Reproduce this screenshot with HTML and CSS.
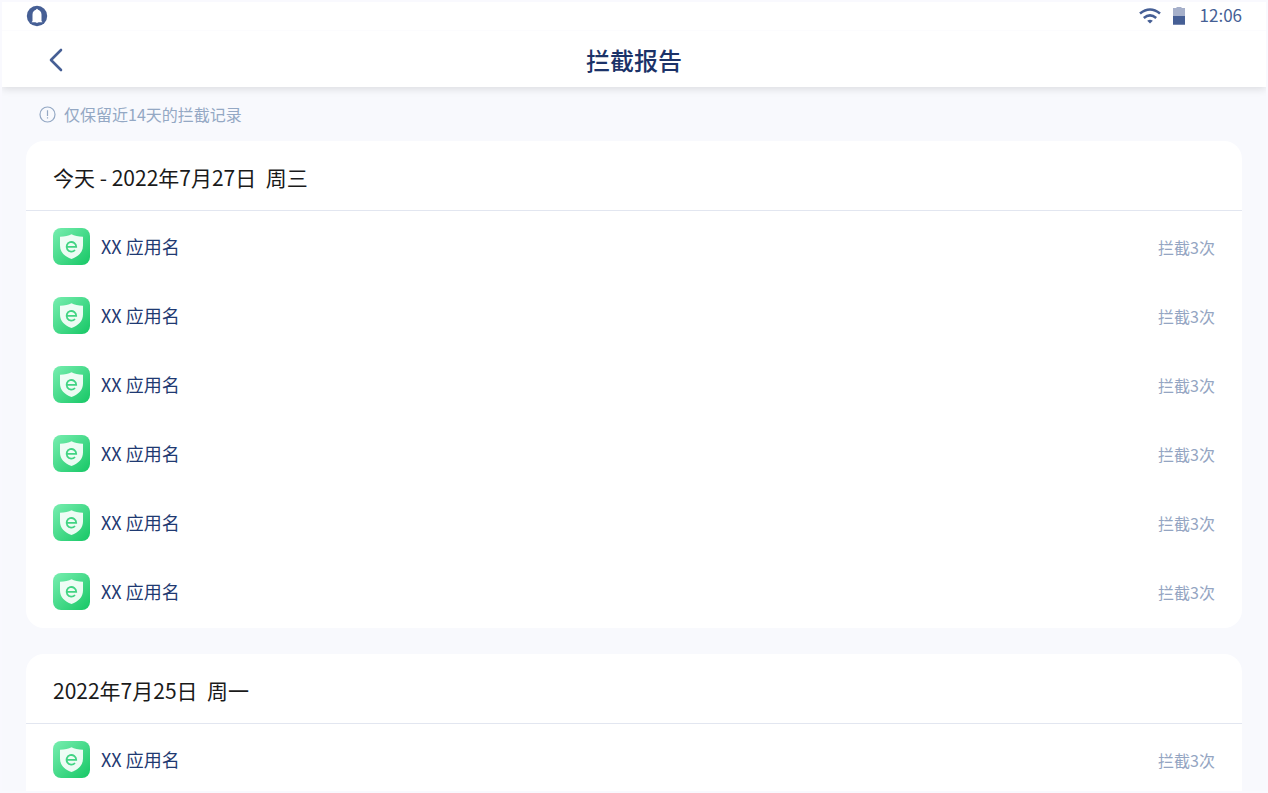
FILE: index.html
```html
<!DOCTYPE html>
<html lang="zh-CN">
<head>
  <meta charset="UTF-8" />
  <meta name="viewport" content="width=device-width, initial-scale=1.0"/>
  <title>拦截报告</title>
  <link rel="stylesheet" href="styles.css">
</head>
<body>

  <!-- Shared app icon -->
  <svg class="symbols" aria-hidden="true">
    <defs>
      <linearGradient id="green" x1="0" y1="0" x2="1" y2="1">
        <stop offset="0" stop-color="#78eeb0"/>
        <stop offset="1" stop-color="#16c765"/>
      </linearGradient>
      <symbol id="app-icon" viewBox="0 0 37 37">
        <rect width="37" height="37" rx="8" fill="url(#green)"/>
        <path d="M18.500 6.300C21 7.600 25.500 8.800 30 8.800V17.500C30 24 25.500 28.500 18.500 31C11.500 28.500 7 24 7 17.500V8.800C11.500 8.800 16 7.600 18.500 6.300Z" fill="#fff" fill-opacity=".9"/>
        <path d="M13.800 18.800H23.200A4.800 4.800 0 1 0 22 22" fill="none" stroke="#41d483" stroke-width="1.800"/>
      </symbol>
    </defs>
  </svg>

  <div class="screen">
    <header class="top">
      <div class="status-bar">
        <svg class="status-logo" width="22" height="22" viewBox="0 0 22 22">
          <circle cx="11" cy="11" r="10.200" fill="#465f95"/>
          <path d="M5.500 17.200L6.500 16V9.500C6.500 6.500 8.500 5 10 4.700Q11 3 12 4.700C13.500 5 15.500 6.500 15.500 9.500V16L16.500 17.200H12.500Q11 18.200 9.500 17.200Z" fill="#fff"/>
        </svg>
        <div class="status-right">
          <svg width="22" height="16" viewBox="0 0 22 16" fill="none" stroke="#465f95" stroke-width="2.600">
            <path d="M1 5.600Q11 -2.600 21 5.600"/>
            <path d="M4.800 9.900Q11 5 17.200 9.900"/>
            <path d="M8.200 12.700Q11 11 13.800 12.700L11 15.600Z" fill="#465f95" stroke="none"/>
          </svg>
          <svg width="12" height="18" viewBox="0 0 12 18">
            <path d="M0 1H3.500V0H8.500V1H12V18H0Z" fill="#a6b0ca"/>
            <path d="M0 9H12V17.500H0Z" fill="#465f95"/>
          </svg>
          <span class="time">12:06</span>
        </div>
      </div>
      <div class="nav-bar">
        <button class="back" type="button" aria-label="返回">
          <svg width="16" height="24" viewBox="0 0 16 24" fill="none" stroke="#465f95" stroke-width="2.600" stroke-linecap="round" stroke-linejoin="round">
            <path d="M13 2L3 12L13 22"/>
          </svg>
        </button>
        <h1>拦截报告</h1>
      </div>
    </header>

    <main>
      <p class="tip">
        <svg width="17" height="17" viewBox="0 0 17 17" fill="none" stroke="#94a8c4" stroke-width="1.200">
          <circle cx="8.500" cy="8.500" r="7.500"/>
          <path d="M8.500 4.300V10M8.500 11.200V12.600"/>
        </svg>
        仅保留近14天的拦截记录
      </p>

      <section class="card">
        <h2>今天 - 2022年7月27日&nbsp; 周三</h2>
        <ul>
          <li><svg class="app-icon"><use href="#app-icon"/></svg><span class="name">XX 应用名</span><span class="count">拦截3次</span></li>
          <li><svg class="app-icon"><use href="#app-icon"/></svg><span class="name">XX 应用名</span><span class="count">拦截3次</span></li>
          <li><svg class="app-icon"><use href="#app-icon"/></svg><span class="name">XX 应用名</span><span class="count">拦截3次</span></li>
          <li><svg class="app-icon"><use href="#app-icon"/></svg><span class="name">XX 应用名</span><span class="count">拦截3次</span></li>
          <li><svg class="app-icon"><use href="#app-icon"/></svg><span class="name">XX 应用名</span><span class="count">拦截3次</span></li>
          <li><svg class="app-icon"><use href="#app-icon"/></svg><span class="name">XX 应用名</span><span class="count">拦截3次</span></li>
        </ul>
      </section>

      <section class="card">
        <h2>2022年7月25日&nbsp; 周一</h2>
        <ul>
          <li><svg class="app-icon"><use href="#app-icon"/></svg><span class="name">XX 应用名</span><span class="count">拦截3次</span></li>
        </ul>
      </section>
    </main>
  </div>

</body>
</html>
```
FILE: styles.css
```css
* {
  box-sizing: border-box;
}

body {
  margin: 0;
  font-family: "Noto Sans CJK SC", sans-serif;
  background: #f8f9fd;
}

svg {
  display: block;
  flex-shrink: 0;
}

.symbols {
  position: absolute;
  width: 0;
  height: 0;
}

.screen {
  height: 100vh;
  border: 2px solid #f9f9fe;
  display: flex;
  flex-direction: column;
  overflow: hidden;
}

.top {
  background: #fff;
  box-shadow: 0 2px 8px rgba(0, 0, 0, 0.12);
  flex-shrink: 0;
  position: relative;
  z-index: 1;
}

.status-bar {
  display: flex;
  justify-content: space-between;
  align-items: center;
  height: 29px;
  padding: 0 24px;
  border-bottom: 1px solid #fcfcfe;
}

.status-right {
  display: flex;
  align-items: center;
  gap: 12px;
}

.time {
  margin-left: 3px;
  padding-bottom: 2px;
  font-size: 17px;
  line-height: 24px;
  color: #465f95;
}

.nav-bar {
  display: grid;
  grid-template-columns: 1fr auto 1fr;
  align-items: center;
  height: 56px;
  padding: 1px 46px 0;
}

.back {
  justify-self: start;
  padding: 0;
  border: none;
  background: none;
  cursor: pointer;
}

h1 {
  margin: 0;
  font-size: 24px;
  line-height: 36px;
  font-weight: 500;
  color: #1b3268;
}

main {
  flex: 1;
  min-height: 0;
  overflow: hidden;
  padding: 15px 24px 0;
}

.tip {
  display: flex;
  align-items: center;
  gap: 8px;
  margin: 0 0 15px;
  padding-left: 13px;
  font-size: 16px;
  line-height: 24px;
  color: #94a8c4;
}

.card {
  background: #fff;
  border-radius: 18px;
  margin-bottom: 26px;
}

.card:last-child {
  margin-bottom: 0;
  border-radius: 18px 18px 0 0;
}

h2 {
  margin: 0;
  padding: 20px 27px 17px;
  border-bottom: 1px solid #e2e6f0;
  font-size: 21px;
  line-height: 32px;
  font-weight: 400;
  color: #1a1a1a;
}

ul {
  list-style: none;
  margin: 0;
  padding: 1px 0 2px;
}

li {
  display: flex;
  align-items: center;
  padding: 16px 27px;
}

.app-icon {
  width: 37px;
  height: 37px;
}

.name {
  margin-left: 11px;
  padding-bottom: 2px;
  font-size: 18px;
  line-height: 28px;
  color: #1f3a72;
}

.count {
  margin-left: auto;
  font-size: 16px;
  line-height: 24px;
  color: #94a5c2;
}
```
